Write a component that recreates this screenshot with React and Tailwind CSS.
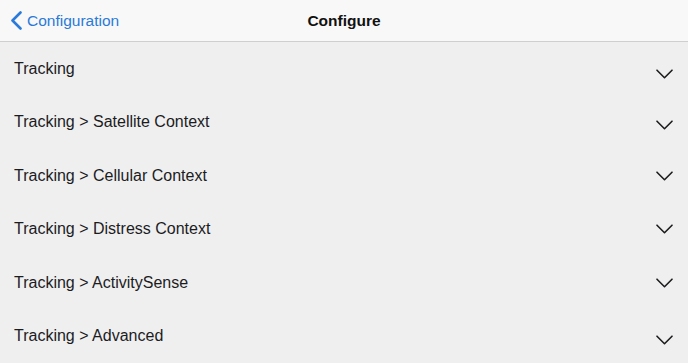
import React from 'react';

const sections = [
  { label: 'Tracking', shift: 'mt-[10px]' },
  { label: 'Tracking > Satellite Context', shift: 'mt-[6px]' },
  { label: 'Tracking > Cellular Context', shift: 'mt-0' },
  { label: 'Tracking > Distress Context', shift: 'mt-0' },
  { label: 'Tracking > ActivitySense', shift: 'mt-[1px]' },
  { label: 'Tracking > Advanced', shift: 'mt-[8px]' },
];

function Chevron() {
  return (
    <svg width="17" height="10" viewBox="0 0 17 10" fill="none" className="shrink-0 block">
      <path d="M1 1.2 L8.5 8.7 L16 1.2" stroke="#1c1c1e" strokeWidth="1.6" strokeLinecap="round" strokeLinejoin="round" />
    </svg>
  );
}

export default function App() {
  return (
    <div className="w-[688px] h-[363px] overflow-hidden bg-[#efeff0]" style={{ fontFamily: '"Liberation Sans", Arial, sans-serif' }}>
      <div className="h-[42px] bg-[#f8f8f8] border-b border-[#cfcfd1] flex items-center relative">
        <div className="flex items-center pl-[10px] text-[#2a7ad9] text-[15.5px] gap-[4px]">
          <svg width="13" height="19" viewBox="0 0 13 19" fill="none">
            <path d="M10.5 1.5 L2.5 9.5 L10.5 17.5" stroke="#2a7ad9" strokeWidth="2.6" strokeLinecap="round" strokeLinejoin="round" />
          </svg>
          <span>Configuration</span>
        </div>
        <div className="absolute left-0 right-0 text-center pointer-events-none text-[15.5px] font-semibold text-[#111]">
          Configure
        </div>
      </div>
      <div className="flex flex-col h-[321px]">
        {sections.map((s) => (
          <div key={s.label} className="flex-1 flex items-center justify-between pl-[14px] pr-[15px]">
            <span className="text-[16px] text-[#1c1c1e]">{s.label}</span>
            <div className={s.shift}><Chevron /></div>
          </div>
        ))}
      </div>
    </div>
  );
}
